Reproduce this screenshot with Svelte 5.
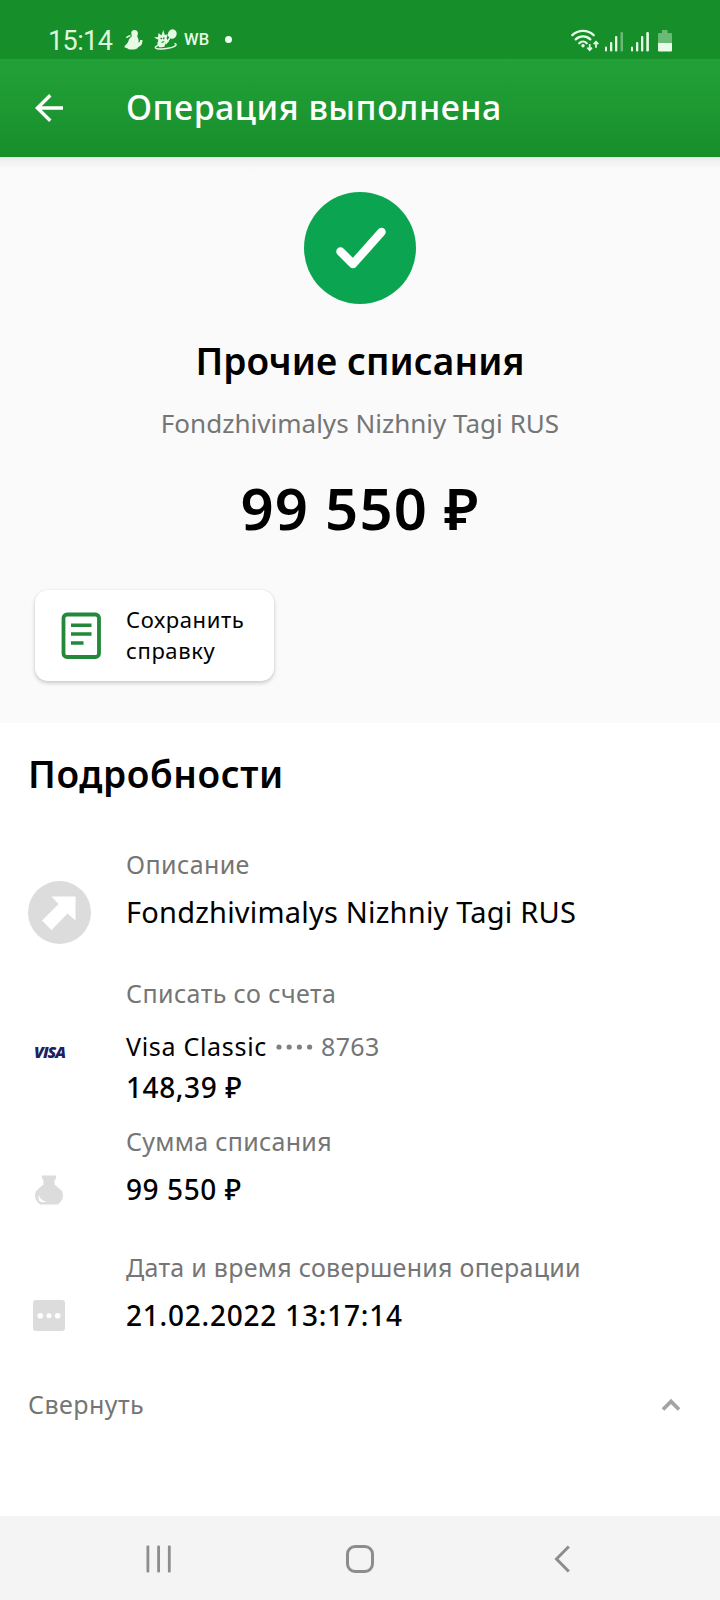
<script>
  let expanded = $state(true);
</script>

<div class="screen">
  <div class="status">
    <span class="time">15:14</span>
    <svg class="n1" width="20" height="22" viewBox="0 0 20 22">
      <path d="M10.500 1a3.400 3.400 0 0 1 3.300 4.400c-.3 1-.9 1.600-.3 2.600 1 1.600 1.300 3 1.100 5.400 1.300 0 1.500-1.400 1.500-2.500l2.300.2c.4 3.800-1.600 6.300-4 6.800-1 1.800-3.300 2.700-6 2.700-2.600 0-4-.3-4.800-1.200L.3 18.200l1-2C2.500 15.500 3.500 14.500 4.200 12.500L5.500 9.500 7.600 7.500C8 6.500 7.500 5.600 7.300 4.800 6.900 2.600 8.400 1 10.500 1z" fill="#e6fae4" />
      <path d="M2.300 8.800C3.500 7.500 5 7 6.500 6.500" stroke="#e6fae4" stroke-width="1.400" fill="none" />
    </svg>
    <svg class="n2" width="25" height="24" viewBox="0 0 25 24">
      <path d="M1 9.500 5 9 5.500 5l3 2.600L10.300 2l1.500 5 3-.8-1.200 4.200 2.400 3.600-3.200.6-1.400 4.200-4.800.8-2.400-3.400 1.200-4.400z" fill="#e6fae4" />
      <ellipse cx="19.300" cy="6" rx="4.300" ry="4.900" transform="rotate(20 19.300 6)" fill="#e6fae4" />
      <path d="M16.500 10.500 13 15.500M22 15.600c3.200 1.400-1 3.600-7 4.700s-12.600.9-12.700-.8c0-1.200 3-2.200 6-2.800" fill="none" stroke="#e6fae4" stroke-width="1.500" stroke-linecap="round" />
      <path d="m7.500 10 1.500 1m2.200-1.500-.8 1.600M8.500 14.500l2.700-1" stroke="#168f2b" stroke-width="1.300" />
    </svg>
    <span class="wb">WB</span>
    <i class="dot"></i>
    <svg class="sys" width="104" height="26" viewBox="0 0 104 26">
      <g fill="none" stroke="#e8fbe6" stroke-width="2.300" stroke-linecap="round">
        <path d="M2.300 8.200a15.500 15.500 0 0 1 21.400 0M5.700 12.400a10.400 10.400 0 0 1 14.600 0M9.300 16.200a5.300 5.300 0 0 1 7.400 0" />
      </g>
      <circle cx="13" cy="18.800" r="1.700" fill="#e8fbe6" />
      <path d="M19.700 17v5.500M17.400 20.700l2.300 2.500 2.300-2.500M26 20.800v-5.600M23.700 17.200 26 14.700l2.300 2.500" fill="none" stroke="#e8fbe6" stroke-width="1.700" />
      <g fill="#e8fbe6">
        <rect x="35" y="19.500" width="2" height="5" rx="1" />
        <rect x="40" y="15" width="2.300" height="9.500" rx="1" />
        <rect x="45" y="9" width="2.300" height="15.500" rx="1" />
        <rect x="50.500" y="5" width="2.500" height="19.500" rx="1" opacity=".4" />
        <rect x="61" y="19.500" width="2" height="5" rx="1" />
        <rect x="66" y="15" width="2.300" height="9.500" rx="1" />
        <rect x="71" y="9" width="2.300" height="15.500" rx="1" />
        <rect x="76.300" y="5" width="2.600" height="19.500" rx="1" />
        <path d="M92 3h5.500v3H101q1 0 1 1v9H88V7q0-1 1-1h3z" opacity=".4" />
        <path d="M88 16h14v7.500q0 1-1 1H89q-1 0-1-1z" />
      </g>
    </svg>
  </div>

  <header>
    <svg width="30" height="30" viewBox="0 0 30 30" fill="none" stroke="#fff" stroke-width="3.400">
      <path d="M29 15H3.500M16.300 2.200 3.400 15l12.900 12.800" />
    </svg>
    <h1>Операция выполнена</h1>
  </header>

  <section class="hero">
    <div class="ok">
      <svg width="112" height="112" viewBox="0 0 112 112">
        <path d="M36.500 59.500 49 72 77.500 40" fill="none" stroke="#fff" stroke-width="8.500" stroke-linecap="round" stroke-linejoin="round" />
      </svg>
    </div>
    <h2>Прочие списания</h2>
    <p class="sub">Fondzhivimalys Nizhniy Tagi RUS</p>
    <p class="amount">99 550 ₽</p>
    <button class="save">
      <svg width="40" height="48" viewBox="0 0 40 48" fill="none" stroke="#23883a">
        <rect x="2.500" y="2.500" width="35.500" height="42.500" rx="3.500" stroke-width="3.800" />
        <path d="M10 13.300h20.500M10 22h20.500M10 31h12.500" stroke-width="3.600" />
      </svg>
      <span>Сохранить<br />справку</span>
    </button>
  </section>

  <section class="details">
    <h2>Подробности</h2>
    {#if expanded}
      <div class="item first">
        <span class="label">Описание</span>
        <svg class="icon big" width="64" height="64" viewBox="0 0 64 64">
          <circle cx="31.500" cy="32.500" r="31.500" fill="#dcdcdc" />
          <path d="M23.500 16.500H47.500V40.500L39.500 33.500 23.500 50 14 40.500 30.500 24z" fill="#fff" />
        </svg>
        <span class="value wide">Fondzhivimalys Nizhniy Tagi RUS</span>
      </div>
      <div class="item account">
        <span class="label">Списать со счета</span>
        <span class="icon visa">VISA</span>
        <span class="card">Visa Classic
          <svg width="37" height="8" viewBox="0 0 37 8" fill="#808080"><circle cx="3" cy="4" r="2.600" /><circle cx="13.200" cy="4" r="2.600" /><circle cx="23.400" cy="4" r="2.600" /><circle cx="33.600" cy="4" r="2.600" /></svg>
          <em>8763</em></span>
        <span class="value balance">148,39 ₽</span>
      </div>
      <div class="item sum">
        <span class="label tight">Сумма списания</span>
        <svg class="icon bag" width="30" height="30" viewBox="0 0 30 30">
          <path d="M7 .5H21V3.500L19.500 5.500V9.500L26 15Q28 17 28 20 28 24.500 25 27.500L23 29.500H5L3 27.500Q0 24.500 0 20 0 17 2 15L8.500 9.500V5.500L7 3.500z" fill="#dcdcdc" />
          <path d="M4 19.500Q4.500 25.800 12 26.500 4.500 28.800 3.600 24 3.400 21.500 4 19.500z" fill="#fff" />
        </svg>
        <span class="value">99 550 ₽</span>
      </div>
      <div class="item date">
        <span class="label tight">Дата и время совершения операции</span>
        <svg class="icon sq" width="32" height="31" viewBox="0 0 32 31">
          <rect width="32" height="31" rx="3" fill="#dcdcdc" />
          <g fill="#fff"><circle cx="7.300" cy="15.700" r="2.800" /><circle cx="16" cy="15.700" r="2.500" /><circle cx="24.700" cy="15.700" r="2.800" /></g>
        </svg>
        <span class="value stamp">21.02.2022 13:17:14</span>
      </div>
    {/if}
    <button class="collapse" onclick={() => (expanded = !expanded)}>
      <span>Свернуть</span>
      <svg width="20" height="14" viewBox="0 0 20 14" fill="none" stroke="#a4a4a4" stroke-width="3.800"><path d="M2 12.500 10 4.500 18 12.500" /></svg>
    </button>
  </section>

  <nav>
    <svg width="26" height="28" viewBox="0 0 26 28" fill="#8d8d8d">
      <rect x="0.500" y="0.500" width="2.800" height="27" rx="1" /><rect x="11.200" y="0.500" width="2.800" height="27" rx="1" /><rect x="21.900" y="0.500" width="2.800" height="27" rx="1" />
    </svg>
    <svg width="28" height="28" viewBox="0 0 28 28" fill="none" stroke="#8d8d8d" stroke-width="3">
      <rect x="1.500" y="1.500" width="25" height="25" rx="7.500" />
    </svg>
    <svg width="16" height="28" viewBox="0 0 16 28" fill="none" stroke="#8d8d8d" stroke-width="3">
      <path d="M14.800 1.500 2.500 14 14.800 26.500" />
    </svg>
  </nav>
</div>

<style>
  :global(body) { margin: 0; background: #fff; }
  .screen {
    width: 720px; height: 1600px; display: flex; flex-direction: column; overflow: hidden;
    font-family: "Noto Sans", sans-serif; color: #000; background: #fff;
  }
  h1, h2, p { margin: 0; }
  svg { display: block; flex: none; }
  button { font: inherit; color: inherit; border: 0; padding: 0; background: none; text-align: left; }

  .status { height: 59px; flex: none; box-sizing: border-box; padding: 20px 46px 0 48px; display: flex; align-items: center; background: #168f2b; }
  .time { width: 76px; margin-top: 3px; font: 400 27px/40px Roboto, sans-serif; letter-spacing: -0.6px; color: #dff7dc; }
  .n2 { margin-left: 9px; }
  .wb { margin-left: 6px; font: 500 16.500px/20px Roboto, sans-serif; letter-spacing: 0.2px; color: #e6fae4; }
  .dot { width: 7px; height: 7px; border-radius: 50%; margin-left: 16px; background: #effdec; }
  .sys { margin-left: auto; }

  header {
    height: 98px; flex: none; box-sizing: border-box; padding-left: 34px; display: flex; align-items: center;
    background: linear-gradient(#23a139, #178f2b);
  }
  header h1 { margin: 0 0 3px 62px; font-size: 34px; line-height: 46px; font-weight: 500; letter-spacing: 0.49px; color: #fff; }

  .hero {
    height: 566px; flex: none; box-sizing: border-box; padding-top: 35px; display: flex; flex-direction: column; align-items: center;
    background: linear-gradient(#e6e8e6, #f3f3f3 5px, #fafafa 13px);
  }
  .ok { width: 112px; height: 112px; border-radius: 50%; background: #0ba551; }
  .hero h2 { margin-top: 33px; letter-spacing: 0.08px; }
  h2 { font-size: 37px; line-height: 48px; font-weight: 600; letter-spacing: 0.6px; }
  .sub { margin-top: 20px; font-size: 26px; line-height: 36px; letter-spacing: 0.02px; color: #757575; }
  .amount { margin-top: 31px; font-size: 58px; line-height: 72px; font-weight: 600; letter-spacing: 1.1px; }
  .save {
    align-self: flex-start; margin: 46px 0 0 35px; width: 239px; height: 91px; box-sizing: border-box; padding: 0 0 2px 26px;
    display: flex; align-items: center; gap: 25px; border-radius: 13px; background: #fff;
    box-shadow: 0 2px 4px rgba(0, 0, 0, 0.2), 0 0 2px rgba(0, 0, 0, 0.06);
    font-size: 22px; line-height: 31px; letter-spacing: 0.6px;
  }
  .save svg { margin-top: 2px; }

  .details { flex: 1; padding: 27px 28px 0; display: flex; flex-direction: column; }
  .item { display: grid; grid-template-columns: 98px 1fr; align-items: center; }
  .label { grid-column: 2; font-size: 25px; line-height: 34px; letter-spacing: 0.4px; color: #757575; }
  .label.tight { letter-spacing: 0.27px; }
  .icon { grid-column: 1; }
  .value { grid-column: 2; font-size: 28px; line-height: 36px; font-weight: 500; letter-spacing: 0.6px; }
  .value.wide { font-size: 29px; line-height: 40px; font-weight: 400; letter-spacing: 0.21px; }
  .value.stamp { letter-spacing: 0.78px; }
  .first { margin-top: 49px; row-gap: 11px; }
  .big { margin: -12px 0; }
  .account { margin-top: 44px; }
  .account .label { margin-bottom: 19px; }
  .visa { padding: 11px 0 0 6px; font: italic 800 16px/16px "Open Sans", sans-serif; letter-spacing: -1px; color: #1d2160; }
  .card { grid-column: 2; display: flex; align-items: center; font-size: 25px; line-height: 34px; letter-spacing: 0.7px; }
  .card svg { margin: 2px 8px 0 9px; }
  .card em { font-style: normal; color: #757575; letter-spacing: 0.37px; }
  .balance { margin-top: 6px; }
  .sum { margin-top: 19px; row-gap: 13px; }
  .bag { margin: 2px 0 0 7px; }
  .date { margin-top: 43px; row-gap: 13px; }
  .sq { margin-left: 5px; }
  .collapse { margin-top: 54px; padding-right: 11px; display: flex; align-items: center; justify-content: space-between; font-size: 25px; line-height: 34px; letter-spacing: 0.46px; color: #757575; }

  nav { height: 84px; flex: none; box-sizing: border-box; padding: 2px 150px 0 146px; display: grid; grid-template-columns: 200px 28px 1fr; align-items: center; background: #f4f4f4; }
  nav svg:last-child { justify-self: end; }
</style>
